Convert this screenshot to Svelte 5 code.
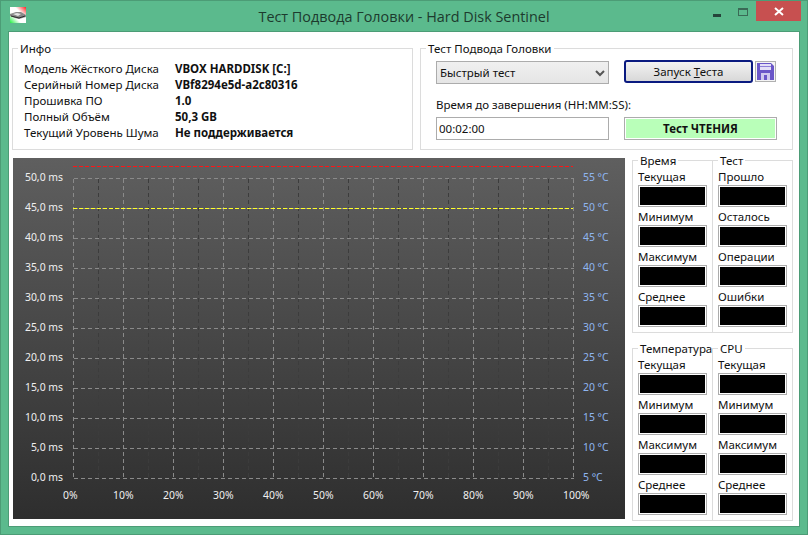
<script>
  const info = [
    ['Модель Жёсткого Диска', 'VBOX HARDDISK [C:]'],
    ['Серийный Номер Диска', 'VBf8294e5d-a2c80316'],
    ['Прошивка ПО', '1.0'],
    ['Полный Объём', '50,3 GB'],
    ['Текущий Уровень Шума', 'Не поддерживается']
  ];

  const statGroups = [
    [
      { title: 'Время', rows: ['Текущая', 'Минимум', 'Максимум', 'Среднее'] },
      { title: 'Тест', rows: ['Прошло', 'Осталось', 'Операции', 'Ошибки'] }
    ],
    [
      { title: 'Температура', rows: ['Текущая', 'Минимум', 'Максимум', 'Среднее'] },
      { title: 'CPU', rows: ['Текущая', 'Минимум', 'Максимум', 'Среднее'] }
    ]
  ];

  // chart coordinates: plot area is 500x300, 60/20 in from the chart's corner
  const plotX = 60;
  const plotY = 20;
  const ticks = Array.from({ length: 11 }, (_, i) => i);
  const rowY = (i) => plotY + 300 - i * 30;
  const colX = (i) => plotX + i * 50;
</script>

<div class="window">
  <header class="titlebar">
    <svg class="app-icon" width="16" height="16" viewBox="0 0 16 16">
      <defs>
        <linearGradient id="logo" x1="1" y1="0" x2="0" y2="1">
          <stop offset="0" stop-color="#ff2020" />
          <stop offset="0.35" stop-color="#ffffff" />
          <stop offset="0.65" stop-color="#ffffff" />
          <stop offset="1" stop-color="#20f040" />
        </linearGradient>
      </defs>
      <rect width="16" height="16" fill="url(#logo)" />
      <path d="M0 7 L6 5 L11 5 L16 8 L16 10 L9 12 L5 11 L0 9 Z" fill="#8a8a8a" />
      <path d="M3 7 L7 6 L11 7 L8 9 Z" fill="#e4e4e4" />
      <path d="M1 9 L5 10 L9 11 L15 9" stroke="#2c2c2c" fill="none" />
    </svg>
    <span class="title">Тест Подвода Головки - Hard Disk Sentinel</span>
    <div class="controls">
      <span class="minimize"></span>
      <span class="maximize"></span>
      <span class="close">
        <svg width="10" height="9" viewBox="0 0 10 9">
          <path d="M1 1 L9 8 M9 1 L1 8" stroke="#fff" stroke-width="2" />
        </svg>
      </span>
    </div>
  </header>

  <main class="body">
    <section class="top">
      <div class="group info">
        <span class="legend">Инфо</span>
        <dl>
          {#each info as [label, value]}
            <dt>{label}</dt>
            <dd>{value}</dd>
          {/each}
        </dl>
      </div>

      <div class="group test">
        <span class="legend">Тест Подвода Головки</span>
        <div class="test-grid">
          <div class="select-wrap">
            <select>
              <option>Быстрый тест</option>
            </select>
            <svg class="chevron" width="10" height="7" viewBox="0 0 10 7">
              <path d="M1 1 L5 5 L9 1" stroke="#555" stroke-width="2" fill="none" />
            </svg>
          </div>
          <div class="actions">
            <button class="start">Запуск <u>Т</u>еста</button>
            <button class="save" aria-label="Сохранить">
              <svg width="17" height="17" viewBox="0 0 17 17">
                <path d="M0 0 H14 L17 3 V17 H0 Z" fill="#6a56c8" />
                <rect x="3" y="1" width="11" height="6" fill="#e4e0f6" />
                <rect x="3" y="3" width="11" height="1" fill="#8d7fd8" />
                <rect x="4" y="10" width="9" height="7" fill="#cfc8ee" />
                <rect x="7" y="12" width="3" height="5" fill="#6a56c8" />
              </svg>
            </button>
          </div>
          <label class="time-label" for="time">Время до завершения (HH:MM:SS):</label>
          <input id="time" class="time" value="00:02:00" />
          <div class="status"><span>Тест ЧТЕНИЯ</span></div>
        </div>
      </div>
    </section>

    <section class="bottom">
      <svg class="chart" width="612" height="361" viewBox="0 0 612 361">
        <defs>
          <linearGradient id="chart-bg" x1="0" y1="0" x2="0" y2="1">
            <stop offset="0" stop-color="#5f5f5f" />
            <stop offset="1" stop-color="#2e2e2e" />
          </linearGradient>
        </defs>
        <rect width="612" height="361" fill="url(#chart-bg)" />

        {#each ticks.slice(0, 10) as i}
          <line class="dark" x1={colX(i) + 25} x2={colX(i) + 25} y1={plotY} y2={plotY + 300} />
        {/each}
        {#each ticks as i}
          <line class="grid" x1={colX(i)} x2={colX(i)} y1={plotY} y2={plotY + 300} />
          <line class="grid" x1={plotX} x2={plotX + 500} y1={rowY(i)} y2={rowY(i)} />
        {/each}

        <line class="limit" stroke="#ff1414" x1={plotX} x2={plotX + 500} y1="8.5" y2="8.5" />
        <line class="limit" stroke="#ffff28" x1={plotX} x2={plotX + 500} y1="50.5" y2="50.5" />

        {#each ticks as i}
          <text class="ms" x="50" y={rowY(i) + 3}>{(i * 5).toFixed(1).replace('.', ',')} ms</text>
          <text class="temp" x="570" y={rowY(i) + 3}>{5 + i * 5} °C</text>
          <text class="pct" x={colX(i) - 10} y="341">{i * 10}%</text>
        {/each}
      </svg>

      <aside class="side">
        {#each statGroups as pair}
          <div class="pair">
            {#each pair as col}
              <div class="group stat">
                <span class="legend">{col.title}</span>
                {#each col.rows as row}
                  <div class="stat-label">{row}</div>
                  <div class="lcd"></div>
                {/each}
              </div>
            {/each}
          </div>
        {/each}
      </aside>
    </section>
  </main>
</div>

<style>
  :global(body) {
    margin: 0;
  }

  .window {
    box-sizing: border-box;
    width: 808px;
    height: 535px;
    padding: 0 7px 7px;
    border: 1px solid #4c9c76;
    background: #5bba8d;
    font: 11.5px/16px "Noto Sans", sans-serif;
    color: #111;
    overflow: hidden;
  }

  .titlebar {
    display: flex;
    align-items: center;
    height: 30px;
    margin: 0 -7px;
    padding-left: 9px;
    position: relative;
  }

  .app-icon {
    margin-top: -2px;
  }

  .title {
    flex: 1;
    text-align: center;
    margin: 0 0 0 -25px;
    font: 14.4px "Open Sans", sans-serif;
    color: #1d3a2e;
  }

  .controls {
    position: absolute;
    top: 0;
    right: 6px;
    display: flex;
    height: 20px;
  }

  .minimize {
    width: 8px;
    height: 3px;
    margin: 13px 17px 0 0;
    background: #25443a;
  }

  .maximize {
    box-sizing: border-box;
    width: 10px;
    height: 8px;
    margin: 7px 8px 0 0;
    border: 1px solid #3a6a56;
    border-top-width: 2px;
  }

  .close {
    display: flex;
    align-items: center;
    justify-content: center;
    width: 45px;
    background: #c75050;
  }

  .body {
    box-sizing: border-box;
    height: 496px;
    padding: 16px 6px 0 3px;
    background: #fff;
    border: 1px solid #4c9c76;
  }

  .top {
    display: flex;
    gap: 7px;
    height: 102px;
  }

  .group {
    position: relative;
    box-sizing: border-box;
    border: 1px solid #dcdcdc;
  }

  .legend {
    position: absolute;
    top: -8px;
    left: 5px;
    padding: 0 2px;
    background: #fff;
    white-space: nowrap;
  }

  .info {
    width: 401px;
    padding: 12px 11px;
  }

  dl {
    display: grid;
    grid-template-columns: 151px 1fr;
    margin: 0;
  }

  dt {
    color: #111;
  }

  dd {
    margin: 0;
    font-weight: 700;
  }

  .test {
    width: 373px;
    padding: 12px 15px;
  }

  .test-grid {
    display: grid;
    grid-template-columns: 173px 1fr;
    column-gap: 15px;
  }

  .select-wrap {
    position: relative;
    height: 23px;
  }

  select {
    appearance: none;
    box-sizing: border-box;
    width: 100%;
    height: 23px;
    padding: 0 3px;
    border: 1px solid #acacac;
    border-radius: 0;
    background: linear-gradient(#f0f0f0, #e5e5e5);
    font: inherit;
    color: #111;
  }

  .chevron {
    position: absolute;
    top: 9px;
    right: 4px;
  }

  .actions {
    display: flex;
    gap: 2px;
    margin-top: -1px;
    height: 23px;
  }

  .start {
    box-sizing: border-box;
    width: 129px;
    height: 23px;
    padding: 0;
    border: 2px solid #0a1a80;
    border-radius: 3px;
    background: linear-gradient(#f2f2f2, #d8d8d8);
    font: inherit;
    color: #111;
  }

  .save {
    display: flex;
    align-items: center;
    justify-content: center;
    box-sizing: border-box;
    width: 21px;
    height: 21px;
    margin-top: 1px;
    padding: 0;
    border: 1px solid #b0b0b0;
    background: #f4f4f4;
  }

  .time-label {
    grid-column: 1 / -1;
    height: 16px;
    margin-top: 13px;
    white-space: nowrap;
  }

  .time {
    box-sizing: border-box;
    width: 173px;
    height: 23px;
    margin-top: 4px;
    padding: 0 2px;
    border: 1px solid #acacac;
    font: inherit;
    color: #111;
    outline: none;
  }

  .status {
    box-sizing: border-box;
    width: 153px;
    height: 23px;
    margin-top: 4px;
    padding: 1px;
    border: 1px solid #acacac;
    font-weight: 700;
    text-align: center;
  }

  .status span {
    display: block;
    height: 19px;
    line-height: 19px;
    background: #b9ffb9;
  }

  .bottom {
    display: flex;
    margin: 8px 0 0 1px;
  }

  .chart {
    display: block;
    flex: none;
  }

  .chart line {
    shape-rendering: crispEdges;
    stroke-width: 1;
  }

  .grid {
    stroke: #8a8a8a;
    stroke-dasharray: 4 3;
    transform: translate(0.5px, 0.5px);
  }

  .dark {
    stroke: #3c3c3c;
    stroke-dasharray: 4 3;
    transform: translate(0.5px, 0.5px);
  }

  .limit {
    stroke-dasharray: 4 2;
  }

  .chart text {
    font: 10.4px "Noto Sans", sans-serif;
  }

  .ms {
    fill: #f0f0f0;
    text-anchor: end;
  }

  .temp {
    fill: #8fb6f0;
  }

  .pct {
    fill: #f0f0f0;
  }

  .side {
    margin: 2px 0 0 7px;
  }

  .pair {
    display: flex;
    margin-bottom: 15px;
  }

  .stat {
    width: 81px;
    height: 173px;
    padding: 8px 5px 0;
  }

  .stat + .stat {
    margin-left: -1px;
  }

  .stat-label {
    height: 16px;
    white-space: nowrap;
  }

  .lcd {
    box-sizing: border-box;
    width: 69px;
    height: 22px;
    margin-bottom: 2px;
    border: 1px solid #acacac;
    outline: 1px solid #fff;
    outline-offset: -2px;
    background: #000;
  }
</style>
